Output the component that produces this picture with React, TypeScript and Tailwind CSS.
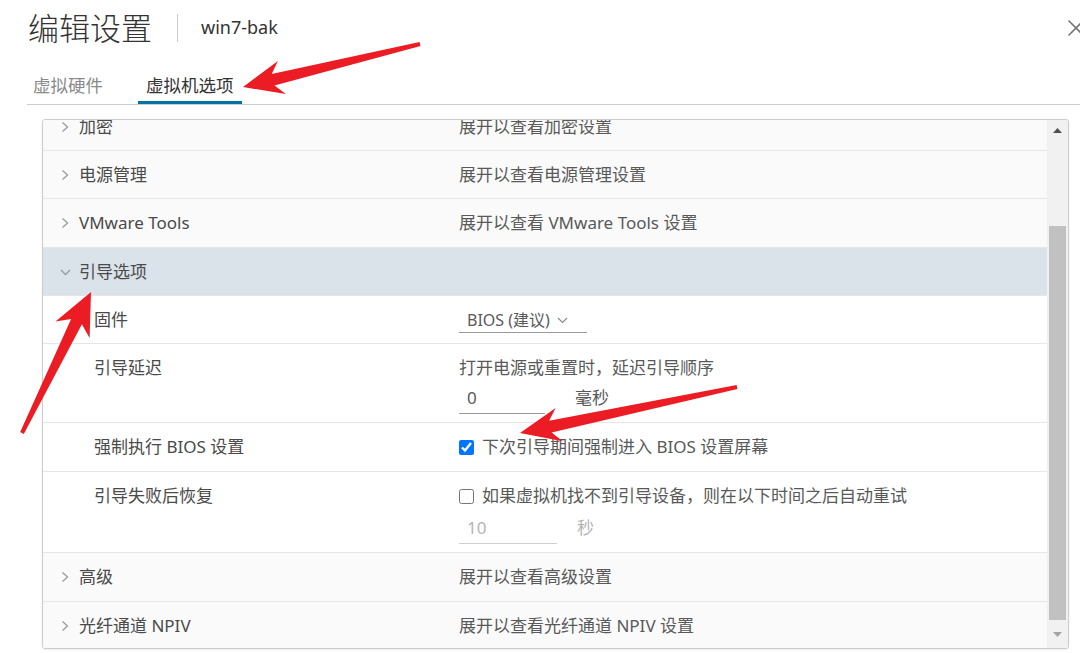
import { ReactNode } from 'react';

const font = { fontFamily: '"Noto Sans", "Noto Sans CJK SC", sans-serif' };

function Chevron() {
  return (
    <svg width="8" height="12" viewBox="0 0 8 12" className="mt-[6px] shrink-0">
      <polyline points="1.5,1.5 6.5,6 1.5,10.5" fill="none" stroke="#9a9a9a" strokeWidth="1.3" />
    </svg>
  );
}

function CollapsedRow({ label, desc, h }: { label: string; desc: string; h: string }) {
  return (
    <div className={`grid grid-cols-[416px_1fr] ${h} bg-[#fafafa] border-b border-[#e6e6e6] pt-[12px]`}>
      <div className="flex items-start pl-[18px]">
        <Chevron />
        <span className="ml-[10px] leading-[24px] text-[#4a4a4a]">{label}</span>
      </div>
      <div className="leading-[24px] text-[#595959]">{desc}</div>
    </div>
  );
}

function ChildRow({ label, h, children }: { label: string; h: string; children: ReactNode }) {
  return (
    <div className={`grid grid-cols-[416px_1fr] ${h} bg-white border-b border-[#e6e6e6] pt-[12px]`}>
      <div className="pl-[51px] leading-[24px] text-[#4a4a4a]">{label}</div>
      <div className="text-[#595959]">{children}</div>
    </div>
  );
}

// red annotation arrow, tail (tx,ty) -> tip (px,py)
function arrow(tx: number, ty: number, px: number, py: number, L: number, W: number) {
  const dx = px - tx;
  const dy = py - ty;
  const len = Math.hypot(dx, dy);
  const ux = dx / len;
  const uy = dy / len;
  const nx = -uy;
  const ny = ux;
  const hx = px - ux * L;
  const hy = py - uy * L;
  const bx = px - ux * (L + 9);
  const by = py - uy * (L + 9);
  const tail = 2;
  const neck = 6;
  const pts = [
    [tx + nx * tail, ty + ny * tail],
    [hx + nx * neck, hy + ny * neck],
    [bx + nx * W, by + ny * W],
    [px, py],
    [bx - nx * W, by - ny * W],
    [hx - nx * neck, hy - ny * neck],
    [tx - nx * tail, ty - ny * tail],
  ];
  return pts.map((p) => `${p[0].toFixed(1)},${p[1].toFixed(1)}`).join(' ');
}

export default function App() {
  return (
    <div className="relative w-[1080px] h-[653px] overflow-hidden bg-white" style={font}>
      <div className="flex items-center h-[56px] pl-[28px]">
        <span className="text-[31px] font-light leading-none text-[#333]">编辑设置</span>
        <div className="ml-[25px] w-px h-[28px] bg-[#cccccc]" />
        <span className="ml-[23px] text-[18px] leading-none text-[#333] pb-[2px]">win7-bak</span>
        <svg width="18" height="18" viewBox="0 0 18 18" className="ml-auto -mr-[5px]">
          <path d="M1.5 1.5 L16.5 16.5 M16.5 1.5 L1.5 16.5" stroke="#777" strokeWidth="1.6" />
        </svg>
      </div>

      <div className="ml-[27px] mt-[10px] flex border-b border-[#cccccc]">
        <div className="h-[38px] px-[6px] flex items-center text-[17.5px] text-[#8a8a8a]">虚拟硬件</div>
        <div className="ml-[29px] h-[38px] px-[8px] flex items-center text-[17.5px] text-[#333] border-b-[3px] border-[#0072a3] pt-[3px]">
          虚拟机选项
        </div>
      </div>

      <div className="ml-[42px] mr-[11px] mt-[14px] h-[530px] border border-[#cccccc] rounded-[3px] flex overflow-hidden shadow-[0_1px_2px_rgba(0,0,0,0.08)] text-[17px]">
        <div className="flex-1 overflow-hidden">
          <div className="-mt-[17px]">
            <CollapsedRow label="加密" desc="展开以查看加密设置" h="h-[48px]" />
            <CollapsedRow label="电源管理" desc="展开以查看电源管理设置" h="h-[48px]" />
            <CollapsedRow label="VMware Tools" desc="展开以查看 VMware Tools 设置" h="h-[49px]" />

            <div className="h-[48px] bg-[#dbe3ea] border-b border-[#e6e6e6] pt-[12px] flex items-start pl-[17px]">
              <svg width="11" height="7" viewBox="0 0 11 7" className="mt-[9px] shrink-0">
                <polyline points="1,1 5.5,5.5 10,1" fill="none" stroke="#9a9a9a" strokeWidth="1.3" />
              </svg>
              <span className="ml-[8px] leading-[24px] text-[#4a4a4a]">引导选项</span>
            </div>

            <ChildRow label="固件" h="h-[48px]">
              <div className="w-[128px] h-[25px] border-b border-[#9a9a9a] flex items-center pl-[8px] text-[16px] text-[#595959]">
                <span>BIOS (建议)</span>
                <svg width="11" height="7" viewBox="0 0 11 7" className="ml-[7px]">
                  <polyline points="1,1 5.5,5.5 10,1" fill="none" stroke="#8a8a8a" strokeWidth="1.2" />
                </svg>
              </div>
            </ChildRow>

            <ChildRow label="引导延迟" h="h-[79px]">
              <div className="leading-[24px]">打开电源或重置时，延迟引导顺序</div>
              <div className="mt-[2px] flex items-center">
                <div className="w-[86px] h-[32px] border-b border-[#9a9a9a] flex items-center pl-[8px]">0</div>
                <span className="ml-[30px]">毫秒</span>
              </div>
            </ChildRow>

            <ChildRow label="强制执行 BIOS 设置" h="h-[49px]">
              <label className="flex items-center leading-[24px]">
                <input type="checkbox" defaultChecked className="w-[15px] h-[15px] m-0 accent-[#0075ff]" />
                <span className="ml-[8px]">下次引导期间强制进入 BIOS 设置屏幕</span>
              </label>
            </ChildRow>

            <ChildRow label="引导失败后恢复" h="h-[81px]">
              <label className="flex items-center leading-[24px]">
                <input type="checkbox" className="w-[15px] h-[15px] m-0 accent-[#0075ff]" />
                <span className="ml-[8px]">如果虚拟机找不到引导设备，则在以下时间之后自动重试</span>
              </label>
              <div className="mt-[4px] flex items-center text-[#b5b5b5]">
                <div className="w-[98px] h-[32px] border-b border-[#d0d0d0] flex items-center pl-[8px]">10</div>
                <span className="ml-[20px]">秒</span>
              </div>
            </ChildRow>

            <CollapsedRow label="高级" desc="展开以查看高级设置" h="h-[49px]" />
            <CollapsedRow label="光纤通道 NPIV" desc="展开以查看光纤通道 NPIV 设置" h="h-[47px]" />
          </div>
        </div>

        <div className="w-[21px] bg-[#f1f1f1] flex flex-col items-center">
          <div className="h-[20px] flex items-center justify-center">
            <svg width="9" height="5" viewBox="0 0 9 5">
              <polygon points="0,5 4.5,0 9,5" fill="#505050" />
            </svg>
          </div>
          <div className="mt-[86px] w-[17px] h-[394px] bg-[#c1c1c1]" />
          <div className="mt-auto mb-[4px] h-[20px] flex items-center justify-center">
            <svg width="9" height="5" viewBox="0 0 9 5">
              <polygon points="0,0 4.5,5 9,0" fill="#a3a3a3" />
            </svg>
          </div>
        </div>
      </div>

      <svg className="absolute inset-0 pointer-events-none" width="1080" height="653">
        <polygon points={arrow(420, 44, 243, 87, 31, 17)} fill="#ec1c24" strokeLinejoin="round" />
        <polygon points={arrow(22, 433, 91, 292, 33, 19)} fill="#ec1c24" strokeLinejoin="round" />
        <polygon points={arrow(737, 387, 520, 433, 31, 17)} fill="#ec1c24" strokeLinejoin="round" />
      </svg>
    </div>
  );
}
